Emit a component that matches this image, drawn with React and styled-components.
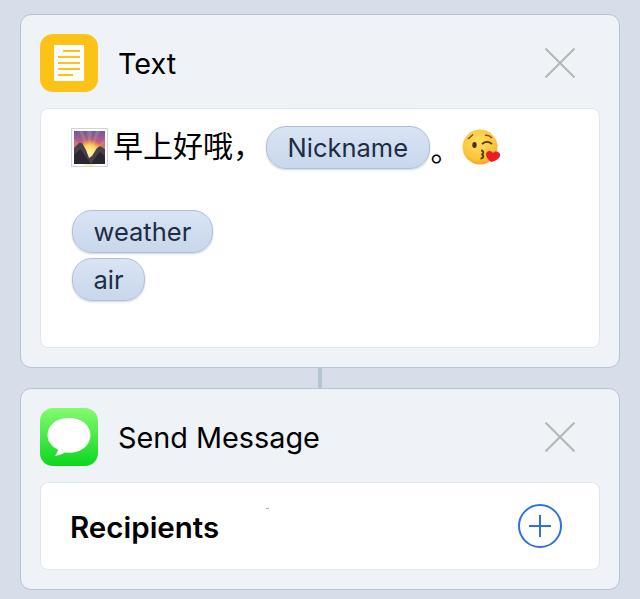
import styled, { createGlobalStyle } from 'styled-components';

const GlobalStyle = createGlobalStyle`
  html, body {
    margin: 0;
    background: #d7deea;
  }
  body {
    font-family: Inter, "Noto Sans CJK SC", "Liberation Sans", sans-serif;
    color: #000;
  }
`;

const Page = styled.div`
  width: 640px;
  height: 599px;
  box-sizing: border-box;
  padding: 14px 20px 0;
  overflow: hidden;
`;

const Card = styled.section`
  box-sizing: border-box;
  height: ${(p) => p.$height}px;
  background: #eff2f7;
  border: 1px solid #b5c4d5;
  border-radius: 11px;
  padding: 19px;
  display: flex;
  flex-direction: column;
  gap: 16px;
`;

const Connector = styled.div`
  width: 4px;
  height: 20px;
  margin-left: 298px;
  background: #b3c5d3;
`;

const Header = styled.header`
  display: flex;
  align-items: center;
  height: 58px;
  flex: none;
`;

const AppIcon = styled.div`
  width: 58px;
  height: 58px;
  border-radius: 13px;
  flex: none;
  overflow: hidden;
  background: ${(p) => p.$bg};
  display: flex;
  align-items: center;
  justify-content: center;
`;

const Title = styled.h2`
  margin: 2px 0 0 20px;
  flex: 1;
  font-size: 28.800px;
  font-weight: 400;
  line-height: 56px;
`;

const CloseButton = styled.button`
  border: none;
  background: none;
  padding: 0;
  margin-right: 25px;
  width: 30px;
  height: 30px;
  display: block;
`;

const Panel = styled.div`
  flex: 1;
  position: relative;
  background: #fff;
  border: 1px solid #e1e7f0;
  border-radius: 8px;
  box-sizing: border-box;
`;

const Editor = styled(Panel)`
  padding: 17px 0 0 31px;
`;

const Line = styled.div`
  display: flex;
  align-items: center;
  height: ${(p) => p.$height}px;
  margin-bottom: ${(p) => p.$gap || 0}px;
`;

const Plain = styled.span`
  font-family: "Noto Sans CJK SC", sans-serif;
  font-size: 30px;
  line-height: 42px;
  margin-left: ${(p) => p.$left || 0}px;
  margin-bottom: ${(p) => p.$lift || 0}px;
  white-space: pre;
`;

const Pill = styled.span`
  box-sizing: border-box;
  height: 43px;
  padding: 0 20.500px;
  margin-left: ${(p) => p.$left || 0}px;
  display: inline-flex;
  align-items: center;
  font-size: 25.500px;
  color: #1d2d45;
  border: 1px solid #b1c0d6;
  border-radius: 20px;
  background: linear-gradient(#d9e4f4, #c9d7ec);
  box-shadow: 0 1px 2px rgba(90, 110, 140, 0.3);
`;

const Recipients = styled(Panel)`
  display: flex;
  align-items: center;
  justify-content: space-between;
  padding: 0 37px 0 29px;
`;

const FieldLabel = styled.span`
  font-size: 29.500px;
  font-weight: 600;
  margin-top: 1px;
`;

const Speck = styled.i`
  position: absolute;
  left: 225px;
  top: 25px;
  width: 3px;
  height: 1px;
  background: #8fb0ee;
`;

const CloseIcon = () => (
  <svg width="30" height="30" viewBox="0 0 30 30">
    <path d="M0.5 0.5L29.5 29.5M29.5 0.5L0.5 29.5" stroke="#b5b5b7" strokeWidth="2" />
  </svg>
);

const NotesIcon = () => (
  <svg width="58" height="58" viewBox="0 0 58 58">
    <rect x="14" y="11" width="30" height="36" fill="#fff" />
    <path d="M23 17H40M18 23H40M18 29H40M18 35H40M18 41H33" stroke="#fdc216" strokeWidth="2" />
  </svg>
);

const MessageIcon = () => (
  <svg width="58" height="58" viewBox="0 0 58 58">
    <path
      d="M29 10C16.500 10 7.500 17 7.500 27C7.500 33.500 11.500 38.500 18 41.500C17.500 44 16.200 46.500 15 48C18 47.800 22 46 25 44.500C26.500 44.700 27.800 44.800 29 44.800C41.500 44.800 50.500 37 50.500 27C50.500 17 41.500 10 29 10Z"
      fill="#fff"
    />
  </svg>
);

const AddIcon = () => (
  <svg width="44" height="44" viewBox="0 0 44 44">
    <circle cx="22" cy="22" r="21" fill="none" stroke="#2f6fe0" strokeWidth="2" />
    <path d="M11 22H33M22 11V33" stroke="#2f6fe0" strokeWidth="2" />
  </svg>
);

const SunriseEmoji = () => (
  <svg width="37" height="39" viewBox="0 0 37 39" style={{ flex: 'none', marginLeft: -1 }}>
    <defs>
      <linearGradient id="sky" x1="0" y1="0" x2="0" y2="1">
        <stop offset="0" stopColor="#6a5aa8" />
        <stop offset="0.35" stopColor="#c0607e" />
        <stop offset="0.65" stopColor="#f79a3c" />
      </linearGradient>
      <radialGradient id="sun" cx="0.5" cy="0.5" r="0.5">
        <stop offset="0" stopColor="#fff6b8" />
        <stop offset="0.55" stopColor="#fdd45c" />
        <stop offset="1" stopColor="#fbb03b" stopOpacity="0" />
      </radialGradient>
    </defs>
    <rect x="0.5" y="0.500" width="36" height="38" fill="#fff" stroke="#cfd4d8" />
    <rect x="3" y="3" width="31" height="33" fill="url(#sky)" />
    <path d="M18.500 26L8 3H12ZM18.500 26L16 3H21ZM18.500 26L25 3H29ZM18.500 26L3 11V15ZM18.500 26L34 11V15Z" fill="#f8b070" opacity="0.25" />
    <circle cx="18.500" cy="25" r="14" fill="url(#sun)" />
    <path d="M3 20L8 15L11 15L15 22L18 30L21 28L26 20L29 18L34 21V36H3Z" fill="#47404a" />
    <path d="M3 27L9 21L13 26L20 36H3ZM24 30L29 24L34 28V36H20Z" fill="#2b2730" />
  </svg>
);

const KissEmoji = () => (
  <svg width="39" height="38" viewBox="0 0 39 38" style={{ flex: 'none', marginLeft: 1 }}>
    <defs>
      <radialGradient id="face" cx="0.45" cy="0.35" r="0.7">
        <stop offset="0" stopColor="#ffdf62" />
        <stop offset="0.7" stopColor="#fdc33a" />
        <stop offset="1" stopColor="#f59a1e" />
      </radialGradient>
    </defs>
    <circle cx="18" cy="18" r="17.500" fill="url(#face)" />
    <ellipse cx="12.500" cy="16" rx="2.200" ry="3" fill="#4a3018" />
    <path d="M20 15C23 12.500 27 12.500 30 15" fill="none" stroke="#5c3c1a" strokeWidth="1.800" />
    <path d="M6 10L11 5.500M23 6.500C25 6 28 7 30 9" fill="none" stroke="#7a5020" strokeWidth="1.500" />
    <path d="M19 21.500C22 21.500 22 25 19.500 25.500C22 26 22 29.500 18.500 29.500" fill="none" stroke="#5c3c1a" strokeWidth="1.800" />
    <path d="M29 33C24 29 23 25 25 23C27 21 30 22 31 24C33 21.500 37 22 38 25C39 29 34 32 29 33Z" fill="#ec1c24" />
  </svg>
);

function App() {
  return (
    <Page>
      <GlobalStyle />
      <Card $height={354}>
        <Header>
          <AppIcon $bg="#fdc216"><NotesIcon /></AppIcon>
          <Title>Text</Title>
          <CloseButton><CloseIcon /></CloseButton>
        </Header>
        <Editor>
          <Line $height={43} $gap={41}>
            <SunriseEmoji />
            <Plain $left={5} $lift={7}>早上好哦，</Plain>
            <Pill $left={3}>Nickname</Pill>
            <Plain $left={1}>。</Plain>
            <KissEmoji />
          </Line>
          <Line $height={43} $gap={5}>
            <Pill>weather</Pill>
          </Line>
          <Line $height={43}>
            <Pill>air</Pill>
          </Line>
        </Editor>
      </Card>
      <Connector />
      <Card $height={202}>
        <Header>
          <AppIcon $bg="linear-gradient(#85fb70, #0bd61f)"><MessageIcon /></AppIcon>
          <Title>Send Message</Title>
          <CloseButton><CloseIcon /></CloseButton>
        </Header>
        <Recipients>
          <FieldLabel>Recipients</FieldLabel>
          <Speck />
          <AddIcon />
        </Recipients>
      </Card>
    </Page>
  );
}

export default App;
